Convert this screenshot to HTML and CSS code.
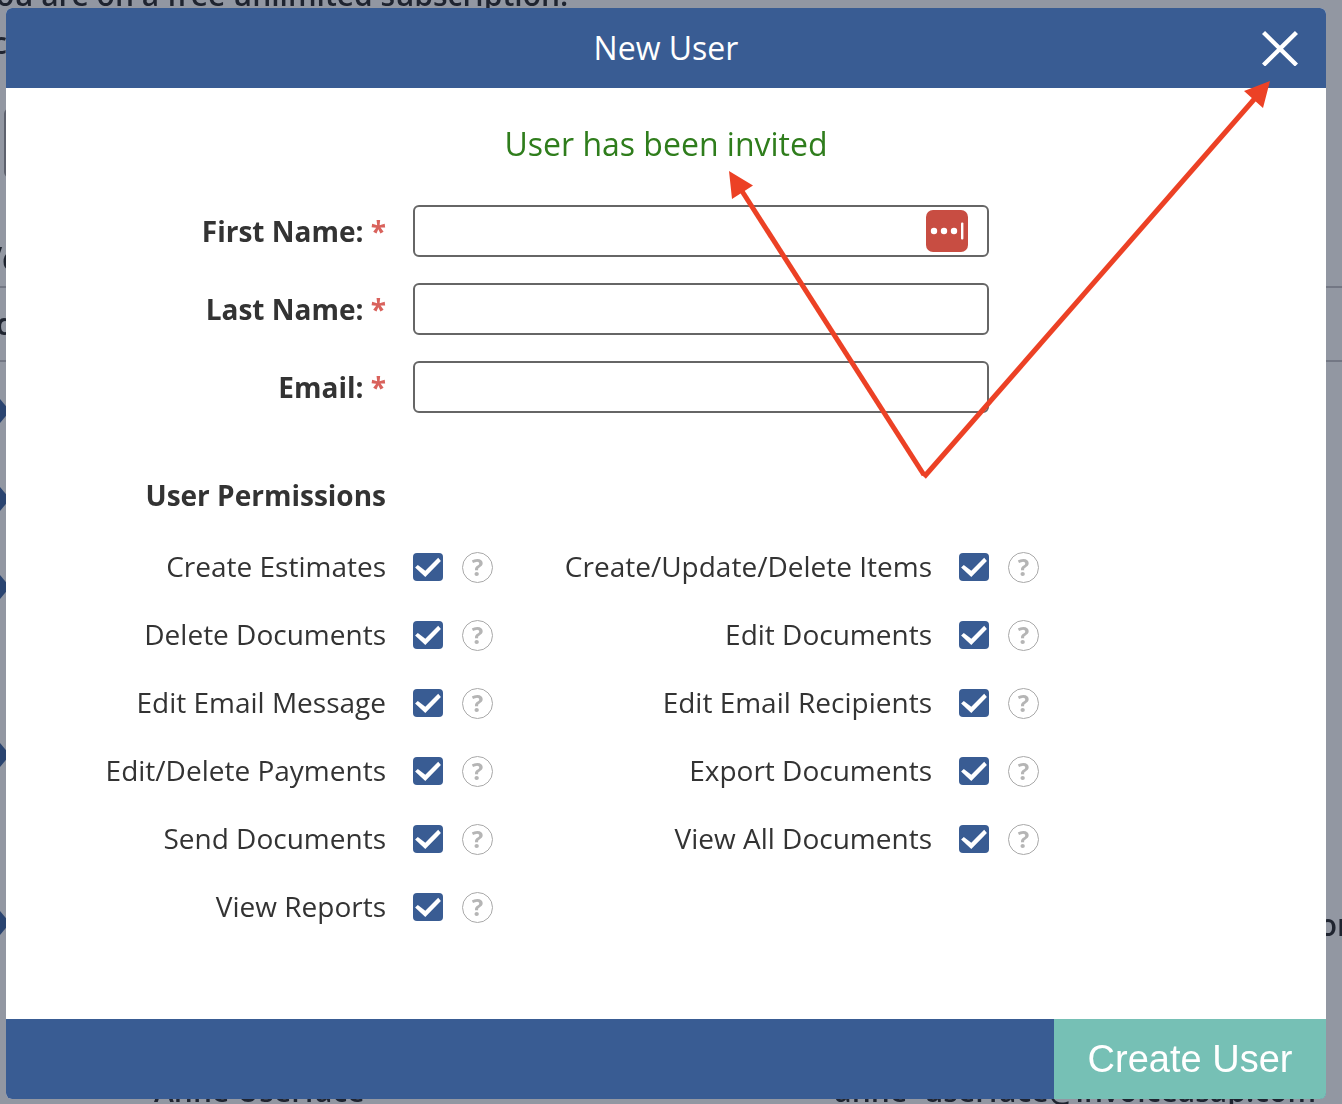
FILE: index.html
```html
<!DOCTYPE html>
<html lang="en">

<head>
    <meta charset="UTF-8">
    <meta name="viewport" content="width=device-width, initial-scale=1.0">
    <title>New User</title>
    <link rel="stylesheet" href="styles.css">
</head>

<body>
    <!-- Dimmed page behind the dialog -->
    <div class="page" aria-hidden="true">
        <p class="notice">ou are on a free unlimited subscription.</p>
        <p class="account">c</p>
        <div class="box"></div>
        <h2 class="page-title">Ve</h2>
        <div class="list-head">d</div>
        <div class="list-row"><i class="marker"></i></div>
        <div class="list-row"><i class="marker"></i></div>
        <div class="list-row"><i class="marker"></i></div>
        <div class="list-row tall"><i class="marker"></i></div>
        <div class="list-row"><i class="marker"></i><span class="role">or</span></div>
        <div class="list-row tall">
            <span class="name">Anne Userface</span>
            <span class="mail">anne+userface@invoiceasap.com</span>
        </div>
    </div>

    <form class="modal" role="dialog" aria-labelledby="modalTitle">
        <header class="modal-header">
            <h1 id="modalTitle">New User</h1>
            <button type="button" class="close" aria-label="Close">
                <svg width="36" height="36" viewBox="0 0 36 36">
                    <path d="M1.5 2.5 L34.5 35 M34.5 2.5 L1.5 35" stroke="#fff" stroke-width="4.4" />
                </svg>
            </button>
        </header>

        <div class="modal-body">
            <p class="message">User has been invited</p>

            <div class="fields">
                <label for="firstName">First Name: <span class="required">*</span></label>
                <div class="field">
                    <input type="text" id="firstName" name="firstName">
                    <button type="button" class="autofill" aria-label="Fill">
                        <svg width="42" height="42" viewBox="0 0 42 42">
                            <rect width="42" height="42" rx="7" fill="#c84d42" />
                            <circle cx="8" cy="21" r="3.2" fill="#fff" />
                            <circle cx="18" cy="21" r="3.2" fill="#fff" />
                            <circle cx="28" cy="21" r="3.2" fill="#fff" />
                            <rect x="35" y="12.5" width="2.4" height="17" rx="1" fill="#fff" />
                        </svg>
                    </button>
                </div>
                <label for="lastName">Last Name: <span class="required">*</span></label>
                <div class="field"><input type="text" id="lastName" name="lastName"></div>
                <label for="email">Email: <span class="required">*</span></label>
                <div class="field"><input type="email" id="email" name="email"></div>
            </div>

            <div class="permissions">
                <h2>User Permissions</h2>
                <div class="permission">
                    <label for="createEstimates">Create Estimates</label>
                    <input type="checkbox" id="createEstimates" checked>
                    <button type="button" class="help">?</button>
                </div>
                <div class="permission">
                    <label for="editItems">Create/Update/Delete Items</label>
                    <input type="checkbox" id="editItems" checked>
                    <button type="button" class="help">?</button>
                </div>
                <div class="permission">
                    <label for="deleteDocuments">Delete Documents</label>
                    <input type="checkbox" id="deleteDocuments" checked>
                    <button type="button" class="help">?</button>
                </div>
                <div class="permission">
                    <label for="editDocuments">Edit Documents</label>
                    <input type="checkbox" id="editDocuments" checked>
                    <button type="button" class="help">?</button>
                </div>
                <div class="permission">
                    <label for="editMessage">Edit Email Message</label>
                    <input type="checkbox" id="editMessage" checked>
                    <button type="button" class="help">?</button>
                </div>
                <div class="permission">
                    <label for="editRecipients">Edit Email Recipients</label>
                    <input type="checkbox" id="editRecipients" checked>
                    <button type="button" class="help">?</button>
                </div>
                <div class="permission">
                    <label for="editPayments">Edit/Delete Payments</label>
                    <input type="checkbox" id="editPayments" checked>
                    <button type="button" class="help">?</button>
                </div>
                <div class="permission">
                    <label for="exportDocuments">Export Documents</label>
                    <input type="checkbox" id="exportDocuments" checked>
                    <button type="button" class="help">?</button>
                </div>
                <div class="permission">
                    <label for="sendDocuments">Send Documents</label>
                    <input type="checkbox" id="sendDocuments" checked>
                    <button type="button" class="help">?</button>
                </div>
                <div class="permission">
                    <label for="viewDocuments">View All Documents</label>
                    <input type="checkbox" id="viewDocuments" checked>
                    <button type="button" class="help">?</button>
                </div>
                <div class="permission">
                    <label for="viewReports">View Reports</label>
                    <input type="checkbox" id="viewReports" checked>
                    <button type="button" class="help">?</button>
                </div>
            </div>
        </div>

        <footer class="modal-footer">
            <button type="submit" class="create">Create User</button>
        </footer>

        <!-- Arrows to the message and the close button -->
        <svg class="arrows" width="560" height="410" viewBox="720 75 560 410">
            <path d="M740 188 L924 475" stroke="#ec4125" stroke-width="5" />
            <path d="M924 477 L1257 96" stroke="#ec4125" stroke-width="5" />
            <path d="M729 171 L753 185.500 L732 199 Z M1270 81 L1244 91 L1263 108 Z" fill="#ec4125" />
        </svg>
    </form>
</body>

</html>
```
FILE: styles.css
```css
* {
    box-sizing: border-box;
}

body {
    font-family: "Open Sans", sans-serif;
    font-size: 28px;
    line-height: 40px;
    color: #333;
    background-color: #9297a2;
    margin: 0;
    display: flow-root;
}

h1,
h2,
p {
    margin: 0;
}

button {
    border: none;
    padding: 0;
    cursor: pointer;
}

svg {
    display: block;
    fill: none;
}

/* Page behind */
.page {
    position: fixed;
    inset: 0;
    overflow: hidden;
    font-size: 30px;
    font-weight: 600;
    color: #1f2430;
}

.notice {
    margin-top: -25px;
    margin-left: -4px;
}

.account {
    margin-top: 8px;
    margin-left: -8px;
}

.box {
    width: 200px;
    height: 70px;
    margin: 45px 0 0 4px;
    border: 2px solid #5d616d;
    border-radius: 6px;
}

.page-title {
    margin: 60px 0 0 -20px;
    height: 48px;
    font-size: 34px;
    font-weight: 700;
}

.list-head {
    height: 76px;
    padding: 16px 0;
    margin-bottom: 5px;
    border-top: 2px solid #737784;
    border-bottom: 2px solid #737784;
    text-indent: -4px;
}

.list-row {
    display: flex;
    align-items: center;
    height: 88px;
}

.list-row.tall {
    height: 248px;
}

.marker {
    width: 10px;
    height: 24px;
    background-color: #2a4470;
    clip-path: polygon(0 0, 100% 50%, 0 100%);
}

.role {
    margin: 4px -8px 0 auto;
}

.name {
    margin-left: 154px;
}

.mail {
    margin: 0 26px 0 auto;
}

/* Dialog */
.modal {
    position: relative;
    margin: 8px 16px 5px 6px;
    background-color: #fff;
    border-radius: 6px;
    overflow: hidden;
}

.modal-header {
    display: grid;
    grid-template-columns: 1fr auto 1fr;
    align-items: center;
    height: 80px;
    padding: 0 28px;
    background-color: #395c93;
    color: #fff;
}

.modal-header h1 {
    grid-column: 2;
    font-size: 32px;
    font-weight: 400;
}

.close {
    justify-self: end;
    background: none;
}

.modal-body {
    padding: 34px 0 92px;
}

.message {
    margin-bottom: 39px;
    font-size: 32px;
    line-height: 44px;
    color: #2f7d1c;
    text-align: center;
}

.fields {
    display: grid;
    grid-template-columns: 380fr 576fr 310fr;
    align-items: center;
    gap: 26px 27px;
}

.fields label {
    grid-column: 1;
    font-weight: 700;
    text-align: right;
}

.required {
    color: #d9625c;
}

.field {
    position: relative;
}

.field input {
    display: block;
    width: 100%;
    height: 52px;
    padding: 0 14px;
    border: 2px solid #666;
    border-radius: 6px;
    font: inherit;
}

.autofill {
    position: absolute;
    top: 5px;
    right: 21px;
    background: none;
}

.permissions {
    display: grid;
    grid-template-columns: 487fr 546fr 287fr;
    row-gap: 28px;
    margin-top: 62px;
}

.permissions h2 {
    grid-column: 1 / -1;
    width: 380px;
    margin-bottom: 4px;
    font-size: 28px;
    font-weight: 700;
    text-align: right;
}

.permission {
    display: flex;
    align-items: center;
    justify-content: flex-end;
    height: 40px;
}

.permission:nth-of-type(odd) {
    grid-column: 1;
}

.permission label {
    padding-bottom: 2px;
}

.permission input {
    appearance: none;
    width: 30px;
    height: 28px;
    margin: 0 19px 0 27px;
    background-color: #395c93;
    border-radius: 4px;
}

.permission input:checked::before {
    content: "";
    display: block;
    height: 28px;
    background-color: #fff;
    clip-path: polygon(7% 52%, 16% 43%, 41% 63%, 84% 17%, 93% 29%, 41% 86%);
}

.help {
    width: 31px;
    height: 31px;
    border: 1px solid #a8a8a8;
    border-radius: 50%;
    background: none;
    font: 700 24px/28px "Open Sans", sans-serif;
    color: #b5b5b5;
}

.modal-footer {
    display: flex;
    justify-content: flex-end;
    height: 80px;
    background-color: #395c93;
}

.create {
    width: 272px;
    background-color: #76c0b5;
    font: 38px "Liberation Sans", Arial, sans-serif;
    color: #fff;
}

.arrows {
    position: absolute;
    top: 67px;
    left: 714px;
    pointer-events: none;
}
```
